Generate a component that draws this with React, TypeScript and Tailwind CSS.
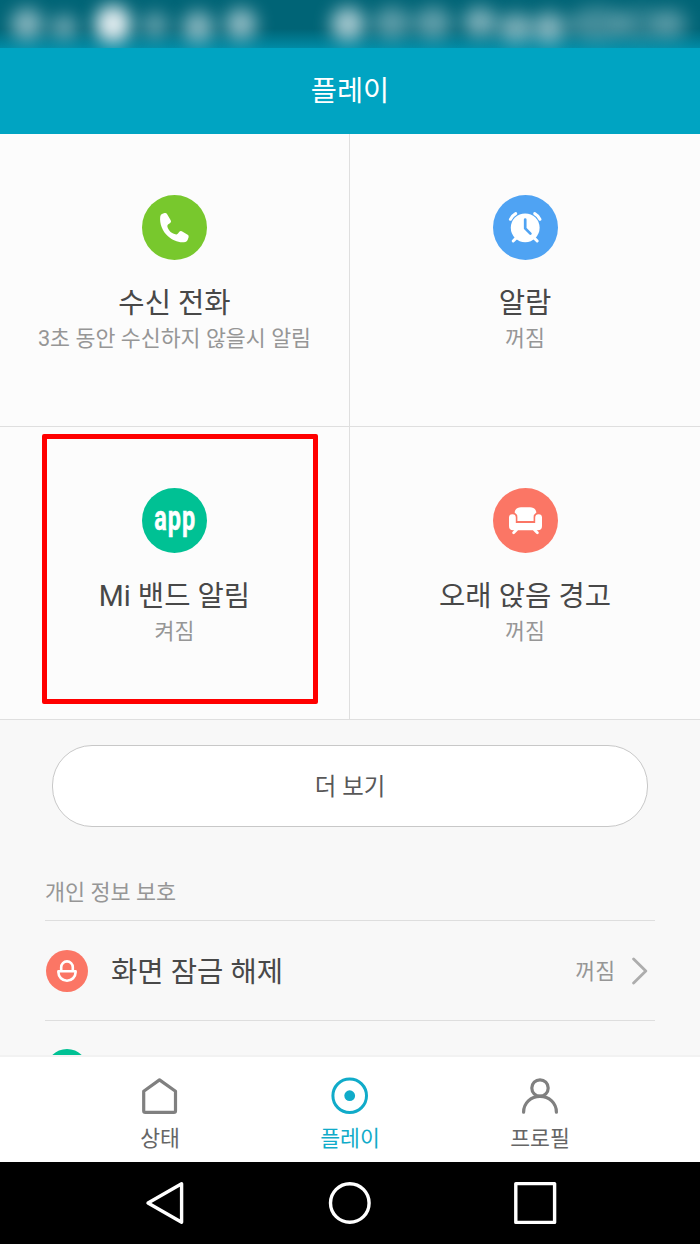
import type { ReactNode } from 'react';

const statusBlobs = [
  { x: 27, y: 24, rx: 16, ry: 16, o: 0.58 },
  { x: 64, y: 27, rx: 14, ry: 12, o: 0.48 },
  { x: 113, y: 24, rx: 18, ry: 19, o: 1 },
  { x: 155, y: 25, rx: 14, ry: 13, o: 0.42 },
  { x: 198, y: 27, rx: 16, ry: 16, o: 0.58 },
  { x: 241, y: 24, rx: 16, ry: 16, o: 0.62 },
  { x: 348, y: 24, rx: 17, ry: 17, o: 0.72 },
  { x: 392, y: 23, rx: 19, ry: 16, o: 0.4 },
  { x: 433, y: 23, rx: 19, ry: 16, o: 0.42 },
  { x: 480, y: 22, rx: 17, ry: 15, o: 0.54 },
  { x: 516, y: 28, rx: 18, ry: 15, o: 0.54 },
  { x: 549, y: 28, rx: 16, ry: 16, o: 0.58 },
  { x: 598, y: 24, rx: 32, ry: 17, o: 0.3 },
  { x: 642, y: 24, rx: 26, ry: 17, o: 0.22 },
  { x: 671, y: 24, rx: 16, ry: 15, o: 0.34 },
];

function StatusBar() {
  return (
    <div className="h-12 shrink-0 overflow-hidden bg-linear-to-b from-[#006476] from-60% to-[#008ba5]">
      <svg className="block h-12 w-[700px]" viewBox="0 0 700 48">
        <defs>
          <filter id="soft" x="-100%" y="-100%" width="300%" height="300%" colorInterpolationFilters="sRGB">
            <feGaussianBlur stdDeviation="8.5" />
          </filter>
        </defs>
        {statusBlobs.map((b) => (
          <ellipse key={b.x} cx={b.x} cy={b.y} rx={b.rx} ry={b.ry} fill="#e2edf0" opacity={b.o} filter="url(#soft)" />
        ))}
      </svg>
    </div>
  );
}

function PhoneIcon() {
  return (
    <svg className="size-[65px]" viewBox="0 0 65 65">
      <circle cx="32.5" cy="32.5" r="32.5" fill="#78c82d" />
      <path
        fill="#fff"
        d="M20.5 18.8 22.6 18.1Q24.2 17.7 25 19L28.7 25.2Q29.6 26.8 28.2 28L26 29.6Q25.1 30.4 25.4 31.7C26.6 35.8 29.8 38.8 34.2 39.4Q35.3 39.6 36 38.6L37.3 36.8Q38.4 35.5 39.8 36.3L45.7 39.8Q47.1 40.7 46.6 42.2L45.6 45Q45 46.6 43.4 46.9C37.5 48.2 30.8 45.5 26 41.2C20.5 36.3 17.4 28.8 18.2 21.7Q18.4 19.5 20.5 18.8Z"
      />
    </svg>
  );
}

function AlarmIcon() {
  return (
    <svg className="size-[65px]" viewBox="0 0 65 65" fill="none" strokeLinecap="round" strokeLinejoin="round">
      <circle cx="32.5" cy="32.5" r="32.5" fill="#4fa3f3" />
      <circle cx="32.2" cy="32.8" r="14.4" fill="#fff" />
      <path stroke="#fff" strokeWidth="3" d="M17.4 24.3Q19.1 20.6 22.7 18.6M41.7 18.6Q45.3 20.6 47 24.3M20.2 46 23.8 42.4M44.2 46 40.6 42.4" />
      <path stroke="#4fa3f3" strokeWidth="2.7" d="M32.2 24.6V33.4L37.4 38.6" />
    </svg>
  );
}

function AppIcon() {
  return (
    <svg className="size-[65px]" viewBox="0 0 65 65">
      <circle cx="32.5" cy="32.5" r="32.5" fill="#00c194" />
      <text
        className="font-['Roboto',sans-serif] font-bold"
        transform="translate(33.2 41.5) scale(0.67 1)"
        textAnchor="middle"
        fontSize="35"
        letterSpacing="1.6"
        fill="#fff"
        stroke="#fff"
        strokeWidth="0.5"
      >
        app
      </text>
    </svg>
  );
}

function SofaIcon() {
  return (
    <svg className="size-[65px]" viewBox="0 0 65 65">
      <circle cx="32.5" cy="32.5" r="32.5" fill="#fb7665" />
      <path fill="#fff" d="M21.6 24.6C22.2 20.8 24.5 19.2 28 19.2H37C40.5 19.2 42.8 20.8 43.4 24.6Q40.6 26.4 40.6 29.2V33H24.4V29.2Q24.4 26.4 21.6 24.6Z" />
      <path
        fill="#fff"
        d="M16 29.6A3.4 3.4 0 0 1 22.8 29.6V35H42.2V29.6A3.4 3.4 0 0 1 49 29.6V38Q49 42.3 44.7 42.3H20.3Q16 42.3 16 38Z"
      />
      <path fill="none" stroke="#fff" strokeWidth="2.8" strokeLinecap="round" d="M23.6 41.8 20.6 44.8M41.4 41.8 44.4 44.8" />
    </svg>
  );
}

function LockIcon() {
  return (
    <svg className="size-[42px]" viewBox="0 0 42 42" fill="none">
      <circle cx="21" cy="21" r="21" fill="#fb7665" />
      <path
        stroke="#fff"
        strokeWidth="2.6"
        strokeLinejoin="round"
        d="M15.2 21V17.2A5.8 5.8 0 0 1 26.8 17.2V21M12.4 21.2H29.6V22.2A8.6 8.6 0 0 1 12.4 22.2Z"
      />
    </svg>
  );
}

type TileProps = { icon: ReactNode; title: string; sub: string; className?: string };

function Tile({ icon, title, sub, className = '' }: TileProps) {
  return (
    <div className={`flex flex-col items-center pt-[61px] ${className}`}>
      {icon}
      <div className="mt-[23px] text-[28.6px] leading-10 text-[#484848]">{title}</div>
      <div className="text-[21.7px] leading-8 whitespace-nowrap text-[#969696]">{sub}</div>
    </div>
  );
}

function Tab({ icon, label, active }: { icon: ReactNode; label: string; active?: boolean }) {
  return (
    <div className={`flex w-[190px] flex-col items-center pt-[20px] ${active ? 'text-[#10abc9]' : 'text-[#666]'}`}>
      {icon}
      <div className="mt-2 text-[21.6px] leading-8">{label}</div>
    </div>
  );
}

export default function App() {
  return (
    <div className="flex h-[1244px] w-[700px] flex-col overflow-hidden bg-[#f8f8f8] font-['Roboto','Noto_Sans_CJK_KR',sans-serif]">
      <StatusBar />

      <header className="flex h-[86px] shrink-0 items-center justify-center bg-[#00a4c2] pt-[2px] text-[28.4px] text-white">
        플레이
      </header>

      {/* Feature tiles */}
      <div className="grid h-[586px] shrink-0 grid-cols-2 grid-rows-2 bg-[#fcfcfc]">
        <Tile className="border-r border-b border-[#dfdfdf]" icon={<PhoneIcon />} title="수신 전화" sub="3초 동안 수신하지 않을시 알림" />
        <Tile className="border-b border-[#dfdfdf]" icon={<AlarmIcon />} title="알람" sub="꺼짐" />
        <div className="relative grid">
          <Tile className="border-r border-b border-[#dfdfdf]" icon={<AppIcon />} title="Mi 밴드 알림" sub="켜짐" />
          {/* Highlight frame */}
          <div className="absolute top-[7px] left-[42px] h-[270px] w-[276px] rounded-[2px] border-[5px] border-[#f00]" />
        </div>
        <Tile className="border-b border-[#dfdfdf]" icon={<SofaIcon />} title="오래 앉음 경고" sub="꺼짐" />
      </div>

      {/* Scroll area, cut off by the tab bar */}
      <main className="h-[335px] shrink-0 overflow-hidden">
        <div className="px-[52px] pt-[25px]">
          <button className="flex h-[82px] w-full items-center justify-center rounded-[40px] border border-[#c8c8c8] bg-white pt-1 text-[23.4px] text-[#585858]">
            더 보기
          </button>
        </div>

        <section className="mx-[45px] mt-[50px]">
          <h2 className="h-[43px] text-[21.8px] leading-8 text-[#969696]">개인 정보 보호</h2>
          <div className="flex h-[101px] items-center border-y border-[#dedede] pr-[7px] pl-px">
            <LockIcon />
            <span className="ml-[23px] grow pt-[3px] text-[28.6px] text-[#484848]">화면 잠금 해제</span>
            <span className="pt-1 text-[21.6px] text-[#969696]">꺼짐</span>
            <svg className="ml-[17px] h-7 w-4" viewBox="0 0 16 28" fill="none" stroke="#adadad" strokeWidth="2.8" strokeLinecap="round" strokeLinejoin="round">
              <path d="M1.6 2 13.8 14 1.6 26" />
            </svg>
          </div>
          <div className="pt-7 pl-px">
            <div className="size-[42px] rounded-full bg-[#00c194]" />
          </div>
        </section>
      </main>

      <nav className="flex h-[107px] shrink-0 justify-center border-t-2 border-[#f2f2f2] bg-white">
        <Tab
          label="상태"
          icon={
            <svg className="size-[38px]" viewBox="0 0 38 38" fill="none" stroke="#808080" strokeWidth="3.2" strokeLinejoin="round">
              <path d="M18.5 2.9 34.5 14.3V33.8Q34.5 35.4 32.9 35.4H4.3Q2.7 35.4 2.7 33.8V14.3Z" />
            </svg>
          }
        />
        <Tab
          active
          label="플레이"
          icon={
            <svg className="size-[38px]" viewBox="0 0 38 38">
              <circle cx="18.7" cy="18.7" r="16.8" fill="none" stroke="currentColor" strokeWidth="3" />
              <circle cx="18.7" cy="18.7" r="5.4" fill="currentColor" />
            </svg>
          }
        />
        <Tab
          label="프로필"
          icon={
            <svg className="size-[38px]" viewBox="0 0 38 38" fill="none" stroke="#808080" strokeWidth="3.2" strokeLinecap="round">
              <circle cx="19" cy="11" r="8.2" />
              <path d="M2.6 35.2C2.6 26 9.8 19.4 19 19.4S35.4 26 35.4 35.2" />
            </svg>
          }
        />
      </nav>

      {/* Android navigation keys */}
      <footer className="flex h-[82px] shrink-0 items-center justify-center bg-black">
        <svg className="h-[44px] w-[414px]" viewBox="0 0 414 44" fill="none" stroke="#fff" strokeWidth="3.4" strokeLinejoin="round">
          <path d="M5 22 38.6 2.8V41.2Z" />
          <circle cx="206.8" cy="22" r="19.3" />
          <rect x="372.8" y="2.6" width="38.8" height="38.8" />
        </svg>
      </footer>
    </div>
  );
}
